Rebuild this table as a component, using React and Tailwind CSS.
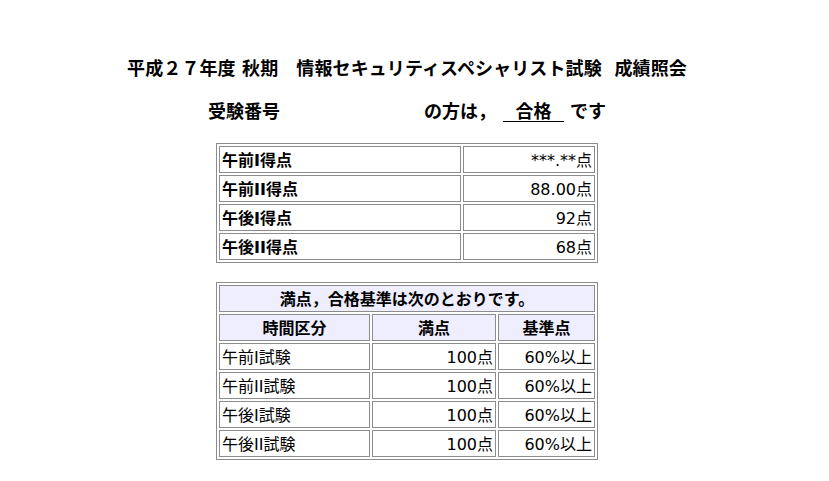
import React from "react";

const font = { fontFamily: '"DejaVu Sans", "Noto Sans CJK JP", sans-serif' };

const cell = "border border-[#8c8c8c] h-[27px] px-[2px] pt-[3px] pb-0 text-[16px] leading-none";

function Row({ label, value }) {
  return (
    <tr>
      <td className={`${cell} text-left font-bold`}>{label}</td>
      <td className={`${cell} text-right`}>{value}</td>
    </tr>
  );
}

function Row3({ a, b, c }) {
  return (
    <tr>
      <td className={`${cell} text-left`}>{a}</td>
      <td className={`${cell} text-right`}>{b}</td>
      <td className={`${cell} text-right`}>{c}</td>
    </tr>
  );
}

export default function App() {
  return (
    <div className="w-[814px] h-[481px] bg-white text-black" style={font}>
      <div className="pt-[58px] text-center font-bold text-[18px] leading-[22px] whitespace-pre tracking-[0.1px]">
        平成２７年度 秋期　情報セキュリティスペシャリスト試験  成績照会
      </div>
      <div className="mt-[21px] flex items-center font-bold text-[18px] leading-[22px] whitespace-pre">
        <span className="ml-[208px]">受験番号</span>
        <span className="ml-[144px]">の方は，</span>
        <span className="ml-[7px] underline underline-offset-[3px]">{"\u00a0\u00a0合格\u00a0\u00a0"}</span>
        <span className="ml-[6px]">です</span>
      </div>
      <div className="mt-[20px] flex justify-center">
        <table className="w-[382px] border-separate border-spacing-[2px] border border-[#8c8c8c]">
          <colgroup>
            <col className="w-[242px]" />
            <col />
          </colgroup>
          <tbody>
            <Row label="午前I得点" value="***.**点" />
            <Row label="午前II得点" value="88.00点" />
            <Row label="午後I得点" value="92点" />
            <Row label="午後II得点" value="68点" />
          </tbody>
        </table>
      </div>
      <div className="mt-[19px] flex justify-center">
        <table className="w-[382px] border-separate border-spacing-[2px] border border-[#8c8c8c]">
          <colgroup>
            <col className="w-[151px]" />
            <col className="w-[124px]" />
            <col />
          </colgroup>
          <tbody>
            <tr>
              <td colSpan={3} className={`${cell} bg-[#eeeeff] text-center font-bold`}>
                満点，合格基準は次のとおりです。
              </td>
            </tr>
            <tr>
              <td className={`${cell} bg-[#eeeeff] text-center font-bold`}>時間区分</td>
              <td className={`${cell} bg-[#eeeeff] text-center font-bold`}>満点</td>
              <td className={`${cell} bg-[#eeeeff] text-center font-bold`}>基準点</td>
            </tr>
            <Row3 a="午前I試験" b="100点" c="60%以上" />
            <Row3 a="午前II試験" b="100点" c="60%以上" />
            <Row3 a="午後I試験" b="100点" c="60%以上" />
            <Row3 a="午後II試験" b="100点" c="60%以上" />
          </tbody>
        </table>
      </div>
    </div>
  );
}
